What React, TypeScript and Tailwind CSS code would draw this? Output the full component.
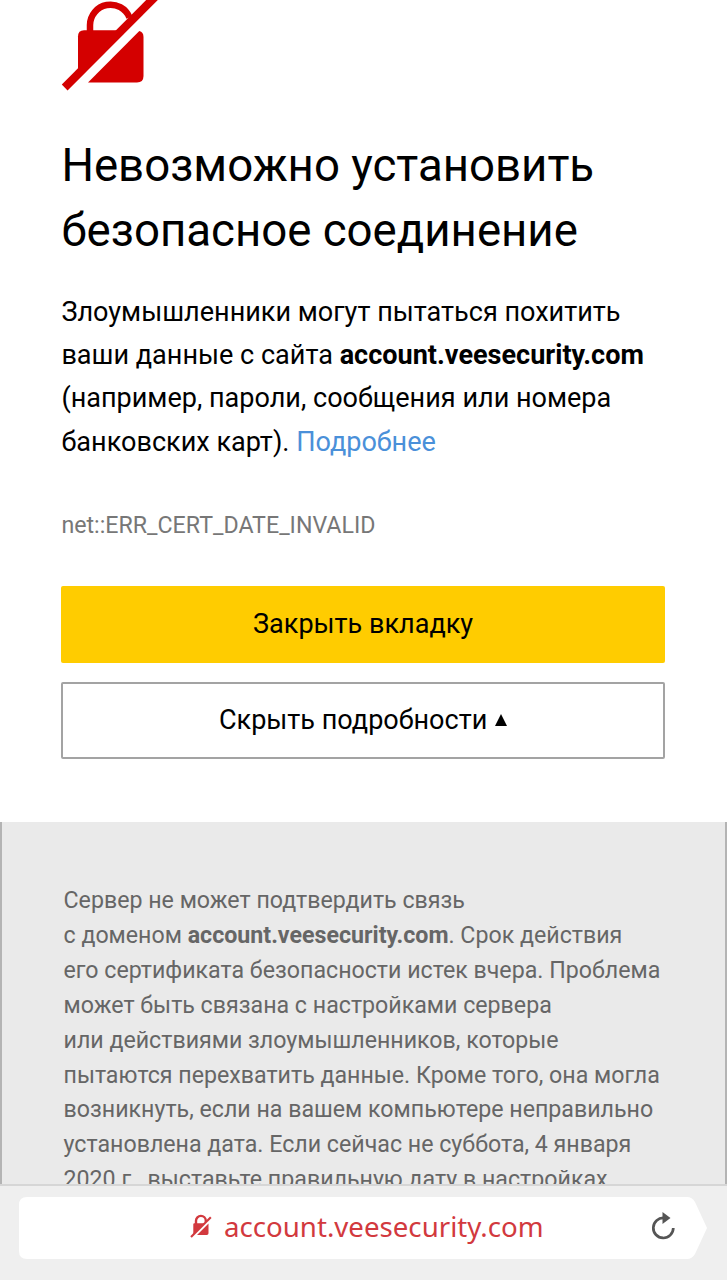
import { clsx } from "clsx";

const detailLines = [
	"его сертификата безопасности истек вчера. Проблема",
	"может быть связана с настройками сервера",
	"или действиями злоумышленников, которые",
	"пытаются перехватить данные. Кроме того, она могла",
	"возникнуть, если на вашем компьютере неправильно",
	"установлена дата. Если сейчас не суббота, 4 января",
	"2020 г., выставьте правильную дату в настройках",
];

function LockOff({ className }: { className?: string }) {
	return (
		<svg
			viewBox="61 0 98 91"
			fill="none"
			stroke="currentColor"
			className={clsx("block shrink-0 overflow-visible", className)}>
			<path d="M90 31V25A20.500 20.500 0 0 1 129.500 17.500" strokeWidth="6.500" />
			<path
				d="M84 30.300H122L78 71V36.300Q78 30.300 84 30.300Z"
				fill="currentColor"
				stroke="none"
			/>
			<path
				d="M139.300 31Q143.500 32 143.500 37V76Q143.500 82.500 137 82.500H88Z"
				fill="currentColor"
				stroke="none"
			/>
			<path d="M64.700 87.500L155.500 -3.500" strokeWidth="8.200" />
		</svg>
	);
}

function SmallLockOff() {
	return (
		<svg
			viewBox="0 0 22 24"
			fill="none"
			stroke="currentColor"
			className="block h-6 w-[22px] shrink-0">
			<path d="M6 10V6.800a4.900 4.900 0 0 1 9.800 0V8" strokeWidth="2.400" />
			<path
				d="M4.300 9.300H15L3.300 20.500V10.300Q3.300 9.300 4.300 9.300ZM18.500 9.500V19.300Q18.500 21 16.800 21H7Z"
				fill="currentColor"
				stroke="none"
			/>
			<path d="M1 23L20.800 3.200" strokeWidth="2.100" />
		</svg>
	);
}

function Reload() {
	return (
		<svg
			viewBox="0 0 24 28"
			fill="none"
			className="block h-7 w-6 shrink-0 text-[#555]">
			<path
				d="M13 6A10 10 0 1 0 22.300 16"
				stroke="currentColor"
				strokeWidth="2.700"
			/>
			<path d="M11.500 0L19.500 6L11.500 12Z" fill="currentColor" />
		</svg>
	);
}

export default function App() {
	return (
		<div className="flex h-[1280px] w-[727px] flex-col overflow-hidden bg-white font-['Roboto',sans-serif] whitespace-nowrap text-black">
			<main className="h-[1184px] shrink-0 overflow-hidden">
				<section className="h-[822px] pr-[62.2px] pl-[61.4px]">
					<LockOff className="h-[91px] w-[98px] text-[#d40000]" />
					<h1 className="mt-[42px] text-[45.6px] leading-[65px]">
						Невозможно установить
						<br />
						безопасное соединение
					</h1>
					<p className="mt-7 text-[27.05px] leading-[43.2px]">
						Злоумышленники могут пытаться похитить
						<br />
						ваши данные с сайта <b>account.veesecurity.com</b>
						<br />
						(например, пароли, сообщения или номера
						<br />
						банковских карт). <a className="text-[#4a90d9]">Подробнее</a>
					</p>
					<p className="mt-[45.2px] text-[23.2px] leading-8 text-[#777]">
						net::ERR_CERT_DATE_INVALID
					</p>
					<button className="mt-[44.5px] block h-[77px] w-full rounded-[2px] bg-[#ffcc00] text-[27.05px]">
						Закрыть вкладку
					</button>
					<button className="mt-[19px] flex h-[77px] w-full items-center justify-center gap-2 rounded-[2px] border-2 border-[#a3a3a3] text-[27.05px]">
						Скрыть подробности
						<svg viewBox="0 0 12 12" className="h-3 w-3 fill-black">
							<path d="M6 0L12 12H0Z" />
						</svg>
					</button>
				</section>
				<section className="h-[380px] border-x-2 border-[#b4b4b4] bg-[#eaeaea] px-[61.5px] pt-[61px] text-[23.2px] leading-[34.9px] text-[#666]">
					<p>
						Сервер не может подтвердить связь
						<br />с доменом <b>account.veesecurity.com</b>. Срок действия
					</p>
					{detailLines.map((line) => (
						<p key={line}>{line}</p>
					))}
				</section>
			</main>
			<footer className="flex h-24 shrink-0 items-start border-t-2 border-[#d6d6d6] bg-[#efefef] pt-[11px] pl-[19px]">
				<div className="relative flex h-[62px] w-[688px] items-center">
					<svg
						viewBox="0 0 688 62"
						className="absolute inset-0 h-full w-full fill-white">
						<path d="M8 0H668Q673 0 676 5L688 31L676 57Q673 62 668 62H8Q0 62 0 54V8Q0 0 8 0Z" />
					</svg>
					<div className="relative flex w-full items-center pb-[5px] pl-[171px] text-[#d2393e]">
						<SmallLockOff />
						<span className="ml-3 w-[427px] font-['Noto_Sans',sans-serif] text-[27.65px] leading-9">
							account.veesecurity.com
						</span>
						<Reload />
					</div>
				</div>
			</footer>
		</div>
	);
}
